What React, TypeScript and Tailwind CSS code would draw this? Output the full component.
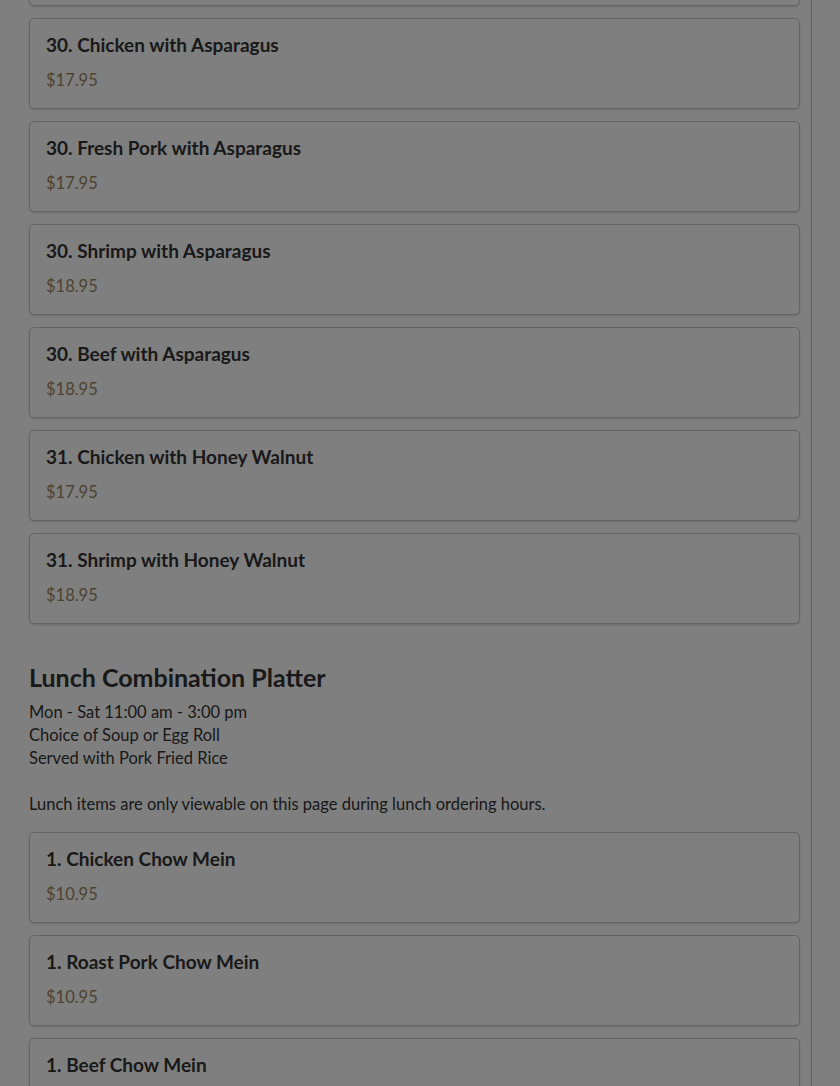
import React from 'react';

type Item = { name: string; price: string };

const topItems: Item[] = [
    { name: '30. Chicken with Asparagus', price: '$17.95' },
    { name: '30. Fresh Pork with Asparagus', price: '$17.95' },
    { name: '30. Shrimp with Asparagus', price: '$18.95' },
    { name: '30. Beef with Asparagus', price: '$18.95' },
    { name: '31. Chicken with Honey Walnut', price: '$17.95' },
    { name: '31. Shrimp with Honey Walnut', price: '$18.95' },
];

const lunchItems: Item[] = [
    { name: '1. Chicken Chow Mein', price: '$10.95' },
    { name: '1. Roast Pork Chow Mein', price: '$10.95' },
    { name: '1. Beef Chow Mein', price: '$10.95' },
];

function MenuCard({ item }: { item: Item }) {
    return (
        <div className="rounded-[5px] border border-[#c8c8c8] bg-white px-4 pt-[15px] pb-[17px] shadow-[0_1px_2px_rgba(0,0,0,0.15)]">
            <div className="text-[19px] leading-[22px] font-bold text-[#333]">{item.name}</div>
            <div className="mt-[13px] text-[16.5px] leading-[22px] text-[#9a8660]">{item.price}</div>
        </div>
    );
}

export default function App() {
    return (
        <div className="relative h-[1086px] overflow-hidden bg-white font-['Lato','Nunito',sans-serif]">
            <div className="w-[812px] border-r border-[#c2c2c2] pl-[29px] pr-[11px] -mt-[85px]">
                <div className="flex flex-col gap-[12px]">
                    <MenuCard item={{ name: '29. Shrimp with Broccoli', price: '$18.95' }} />
                    {topItems.map((item, i) => (
                        <MenuCard key={i} item={item} />
                    ))}
                </div>

                {/* Lunch section */}
                <h2 className="mt-[38px] text-[25px] leading-[30px] font-bold text-[#333]">Lunch Combination Platter</h2>
                <div className="mt-[9px] text-[16.5px] leading-[23px] text-[#333]">
                    <div>Mon - Sat 11:00 am - 3:00 pm</div>
                    <div>Choice of Soup or Egg Roll</div>
                    <div>Served with Pork Fried Rice</div>
                    <div className="h-[23px]" />
                    <div>Lunch items are only viewable on this page during lunch ordering hours.</div>
                </div>

                <div className="mt-[16px] flex flex-col gap-[12px]">
                    {lunchItems.map((item, i) => (
                        <MenuCard key={i} item={item} />
                    ))}
                </div>
            </div>

            {/* modal backdrop */}
            <div className="absolute inset-0 bg-black/50" />
        </div>
    );
}
